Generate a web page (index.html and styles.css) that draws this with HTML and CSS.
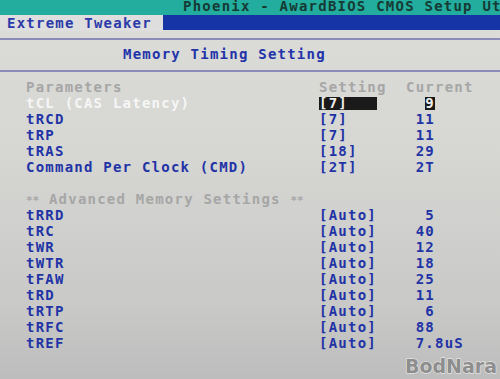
FILE: index.html
```html
<!DOCTYPE html>
<html>
<head>
<meta charset="utf-8">
<link rel="stylesheet" href="styles.css">
</head>
<body>
<div class="screen">
  <div class="topbar"><span class="app-title">Phoenix - AwardBIOS CMOS Setup Utility</span></div>
  <div class="tabrow">
    <div class="tab">Extreme Tweaker</div>
    <div class="tabfill"></div>
  </div>
  <div class="rule rule-top"></div>
  <div class="title">Memory Timing Setting</div>
  <div class="rule"></div>
  <div class="table">
    <div class="row head"><span class="c1">Parameters</span><span class="c2">Setting</span><span class="c3">Current</span></div>
    <div class="row sel"><span class="c1">tCL (CAS Latency)</span><span class="c2"><span class="hl">[7]   </span></span><span class="c3">  <span class="hl">9</span></span></div>
    <div class="row"><span class="c1">tRCD</span><span class="c2">[7]</span><span class="c3"> 11</span></div>
    <div class="row"><span class="c1">tRP</span><span class="c2">[7]</span><span class="c3"> 11</span></div>
    <div class="row"><span class="c1">tRAS</span><span class="c2">[18]</span><span class="c3"> 29</span></div>
    <div class="row"><span class="c1">Command Per Clock (CMD)</span><span class="c2">[2T]</span><span class="c3"> 2T</span></div>
    <div class="row"><span class="c1"> </span></div>
    <div class="row head"><span class="c1 wide"><span class="ast">**</span> Advanced Memory Settings <span class="ast">**</span></span></div>
    <div class="row"><span class="c1">tRRD</span><span class="c2">[Auto]</span><span class="c3">  5</span></div>
    <div class="row"><span class="c1">tRC</span><span class="c2">[Auto]</span><span class="c3"> 40</span></div>
    <div class="row"><span class="c1">tWR</span><span class="c2">[Auto]</span><span class="c3"> 12</span></div>
    <div class="row"><span class="c1">tWTR</span><span class="c2">[Auto]</span><span class="c3"> 18</span></div>
    <div class="row"><span class="c1">tFAW</span><span class="c2">[Auto]</span><span class="c3"> 25</span></div>
    <div class="row"><span class="c1">tRD</span><span class="c2">[Auto]</span><span class="c3"> 11</span></div>
    <div class="row"><span class="c1">tRTP</span><span class="c2">[Auto]</span><span class="c3">  6</span></div>
    <div class="row"><span class="c1">tRFC</span><span class="c2">[Auto]</span><span class="c3"> 88</span></div>
    <div class="row"><span class="c1">tREF</span><span class="c2">[Auto]</span><span class="c3"> 7.8uS</span></div>
  </div>
  <div class="watermark">BodNara</div>
</div>
</body>
</html>
```
FILE: styles.css
```css
html, body {
  margin: 0;
  padding: 0;
}
body {
  width: 500px;
  height: 379px;
  overflow: hidden;
}
.screen {
  position: relative;
  width: 500px;
  height: 379px;
  overflow: hidden;
  background: linear-gradient(180deg, #dcdcd8 0%, #d6d6d3 40%, #c9c9c8 80%, #bdbdbd 100%);
  font-family: "DejaVu Sans Mono", "Liberation Mono", monospace;
  font-weight: bold;
  font-size: 14px;
  letter-spacing: 1.23px;
  color: #2233a6;
}
.topbar {
  height: 15px;
  line-height: 13px;
  background: #22ad9e;
  color: #163a34;
  white-space: nowrap;
  overflow: hidden;
  padding-left: 183px;
}
.tabrow {
  display: flex;
  height: 16px;
  line-height: 16px;
}
.tab {
  width: 156px;
  padding-left: 7px;
  white-space: nowrap;
  color: #2a3aa8;
  background: #dedede;
}
.tabfill {
  flex: 1;
  background: #1634a6;
  margin-bottom: 1px;
}
.rule {
  height: 2px;
  background: #8c8cba;
}
.rule-top {
  margin-top: 7px;
}
.title {
  padding-left: 123px;
  line-height: 16px;
  margin: 6px 0 8px;
  color: #2233aa;
  white-space: pre;
}
.table {
  margin-top: 7px;
  padding-left: 26px;
}
.row {
  display: flex;
  height: 16px;
  line-height: 16px;
  white-space: pre;
}
.c1 {
  width: 293px;
  flex: none;
}
.c1.wide {
  width: auto;
}
.c2 {
  width: 87px;
  flex: none;
}
.c3 {
  flex: 1;
}
.head {
  color: #a6a6a6;
}
.ast {
  font-size: 11px;
  letter-spacing: 0;
}
.sel .c1 {
  color: #f6f6f6;
}
.hl {
  display: inline-block;
  height: 13px;
  line-height: 13px;
  background: #1a1a1a;
  color: #f0f0f0;
}
.watermark {
  position: absolute;
  right: 3px;
  bottom: 2px;
  font-family: "DejaVu Sans", "Liberation Sans", sans-serif;
  font-weight: bold;
  font-size: 19px;
  letter-spacing: 0;
  color: #8e8e8e;
  -webkit-text-stroke: 1px #f2f2f2;
  paint-order: stroke fill;
}
```
